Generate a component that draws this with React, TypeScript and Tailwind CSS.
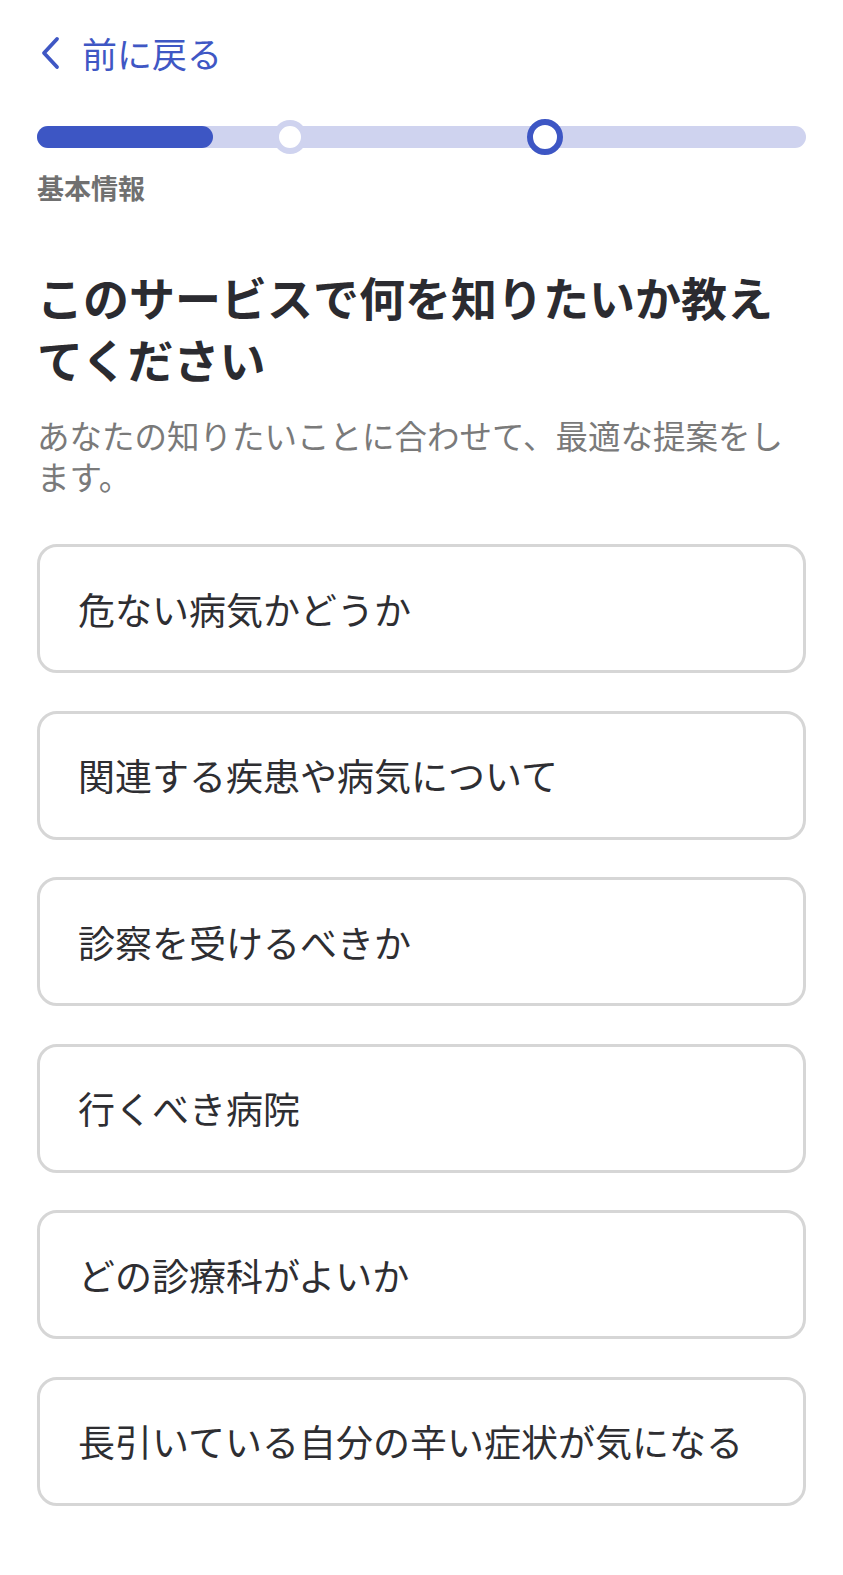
import React from "react";

const options = [
  "危ない病気かどうか",
  "関連する疾患や病気について",
  "診察を受けるべきか",
  "行くべき病院",
  "どの診療科がよいか",
  "長引いている自分の辛い症状が気になる",
];

export default function App() {
  return (
    <div
      className="min-h-[1575px] w-full bg-white px-[37px]"
      style={{ fontFamily: '"Noto Sans CJK JP", "Noto Sans", sans-serif' }}
    >
      <div className="pt-[35px]">
        <div className="flex h-[36px] items-center text-[#3f57c4]">
          <svg width="24" height="34" viewBox="0 0 24 34" className="ml-[1px]">
            <path
              d="M19 3 L6 17 L19 31"
              fill="none"
              stroke="#3f57c4"
              strokeWidth="3.8"
              strokeLinecap="round"
              strokeLinejoin="round"
            />
          </svg>
          <span className="ml-[20px] text-[35px] leading-[36px]">前に戻る</span>
        </div>
      </div>

      <div className="relative mt-[55px] h-[22px] w-full rounded-full bg-[#cfd3ef]">
        <div className="h-[22px] w-[176px] rounded-full bg-[#3d56c4]" />
        <div className="absolute left-[236px] top-[-6px] h-[34px] w-[34px] rounded-full border-[6px] border-[#cfd3ef] bg-white" />
        <div className="absolute left-[490px] top-[-7px] h-[36px] w-[36px] rounded-full border-[6px] border-[#3d56c4] bg-white" />
      </div>

      <div className="mt-[22px] text-[27px] font-bold leading-[36px] text-[#707070]">基本情報</div>

      <h1 className="mt-[59px] text-[46px] font-bold leading-[62px] text-[#2b2b30]">
        このサービスで何を知りたいか教えてください
      </h1>

      <p className="mt-[25px] text-[32.5px] leading-[41px] text-[#7a7a7a]">
        あなたの知りたいことに合わせて、最適な提案をします。
      </p>

      <div className="mt-[48px] flex flex-col gap-[37.5px]">
        {options.map((o) => (
          <div
            key={o}
            className="flex h-[129px] items-center rounded-[20px] border-[3px] border-[#d6d6d6] bg-white pl-[38px]"
          >
            <span className="text-[37px] leading-[44px] text-[#2e2e32]">{o}</span>
          </div>
        ))}
      </div>
    </div>
  );
}
